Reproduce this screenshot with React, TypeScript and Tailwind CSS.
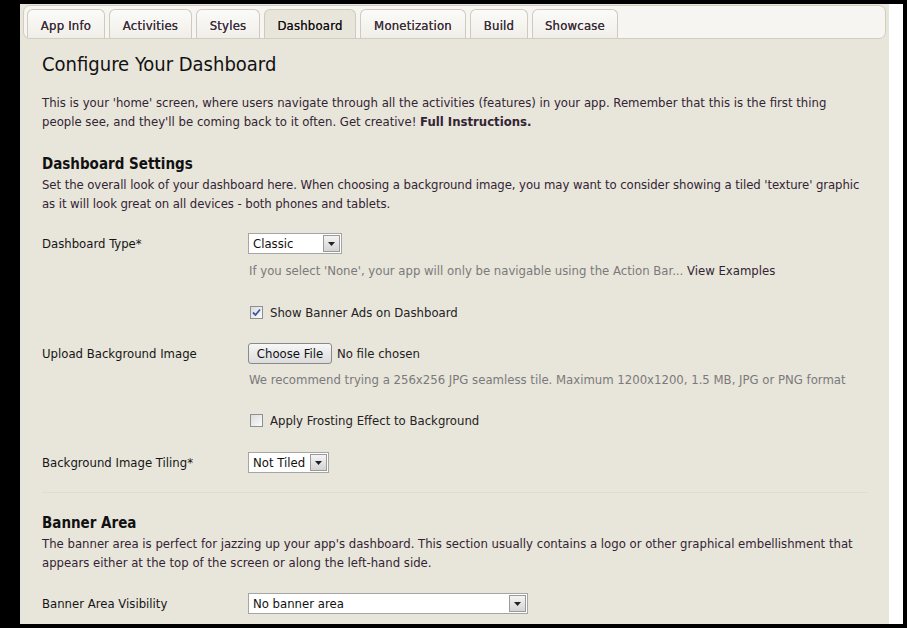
import React from "react";

const tabs = [
  { label: "App Info", w: "w-[78px]" },
  { label: "Activities", w: "w-[83px]" },
  { label: "Styles", w: "w-[64px]" },
  { label: "Dashboard", w: "w-[92px]", active: true },
  { label: "Monetization", w: "w-[106px]" },
  { label: "Build", w: "w-[58px]" },
  { label: "Showcase", w: "w-[86px]" },
];

function Arrow() {
  return (
    <div className="flex h-full w-[17px] items-center justify-center border border-[#9a9a9a] bg-gradient-to-b from-[#f4f4f4] to-[#d4d4d4]">
      <svg width="7" height="4" viewBox="0 0 7 4">
        <polygon points="0,0 7,0 3.5,4" fill="#222" />
      </svg>
    </div>
  );
}

function Select({ value, w }: { value: string; w: string }) {
  return (
    <div className={`flex h-[21px] items-center justify-between border border-[#a5a5a5] bg-white pl-[4px] ${w}`}>
      <span className="text-[13px] text-[#111]">{value}</span>
      <div className="h-[17px] pr-[1px]">
        <Arrow />
      </div>
    </div>
  );
}

function Checkbox({ checked }: { checked?: boolean }) {
  return (
    <div className="flex h-[13px] w-[13px] items-center justify-center border border-[#8e8f8f] bg-gradient-to-br from-[#dcdcdc] to-[#fbfbfb]">
      {checked && (
        <svg width="9" height="9" viewBox="0 0 9 9">
          <path d="M1 4.5 L3.5 7 L8 1.5" stroke="#3d56a8" strokeWidth="1.8" fill="none" />
        </svg>
      )}
    </div>
  );
}

function Row({ label, children }: { label: string; children: React.ReactNode }) {
  return (
    <div className="flex items-center">
      <div className="w-[206px] text-[13px] text-[#151515]">{label}</div>
      {children}
    </div>
  );
}

export default function App() {
  return (
    <div className="flex h-[628px] w-[907px] overflow-hidden bg-black pl-[20px] pr-[4px] pt-[4px] font-['DejaVu_Sans_Condensed','DejaVu_Sans',sans-serif] text-[13px]">
      <div className="h-[620px] w-[869px] bg-[#e8e5db]">
        {/* tab bar */}
        <div className="ml-[3px] mt-[1px] flex h-[34px] w-[863px] items-end gap-[4px] rounded-[7px] border border-[#d2cdc0] bg-[#f6f5f1] pl-[3px]">
          {tabs.map((t) => (
            <div
              key={t.label}
              className={`flex h-[29px] items-center justify-center rounded-t-[6px] border border-b-0 border-[#cfcabd] pt-[3px] text-[13px] tracking-[0.2px] [text-shadow:0_0_0.5px_#3b2d3b] ${t.w} ${
                t.active
                  ? "bg-[#e8e5db] text-[#111]"
                  : "bg-gradient-to-b from-[#fbfbf9] to-[#f0eee8] text-[#3b2d3b]"
              }`}
            >
              {t.label}
            </div>
          ))}
        </div>

        <div className="pl-[22px] pr-[21px]">
          <h1 className="mt-[13px] text-[20px] leading-[24px] text-[#111]">Configure Your Dashboard</h1>
          <p className="mt-[17px] text-[13px] leading-[19px] text-[#332433]">
            This is your 'home' screen, where users navigate through all the activities (features) in your app. Remember that this is the first thing people see, and they'll be coming back to it often. Get creative!{" "}
            <span className="font-bold">Full Instructions.</span>
          </p>

          <h2 className="mt-[23px] text-[15px] font-bold leading-[20px] text-[#111]">Dashboard Settings</h2>
          <p className="mt-[1px] text-[13px] leading-[19px] tracking-[-0.07px] text-[#332433]">
            Set the overall look of your dashboard here. When choosing a background image, you may want to consider showing a tiled 'texture' graphic as it will look great on all devices - both phones and tablets.
          </p>

          <div className="mt-[20px]">
            <Row label="Dashboard Type*">
              <Select value="Classic" w="w-[94px]" />
            </Row>
          </div>
          <div className="mt-[7px] pl-[207px] text-[13px] leading-[19px] text-[#7a7a7a]">
            If you select 'None', your app will only be navigable using the Action Bar...{" "}
            <span className="text-[#332433]">View Examples</span>
          </div>

          <div className="mt-[23px] flex h-[19px] items-center pl-[208px]">
            <Checkbox checked />
            <span className="ml-[7px] text-[13px] text-[#222]">Show Banner Ads on Dashboard</span>
          </div>

          <div className="mt-[21px]">
            <Row label="Upload Background Image">
              <div className="flex items-center">
                <div className="flex h-[21px] w-[84px] items-center justify-center rounded-[3px] border border-[#8a8a8a] bg-gradient-to-b from-[#f7f7f7] to-[#dcdcdc] text-[13px] text-[#111]">
                  Choose File
                </div>
                <span className="ml-[5px] text-[13px] text-[#222]">No file chosen</span>
              </div>
            </Row>
          </div>
          <div className="mt-[6px] pl-[207px] text-[13px] leading-[19px] text-[#7a7a7a]">
            We recommend trying a 256x256 JPG seamless tile. Maximum 1200x1200, 1.5 MB, JPG or PNG format
          </div>

          <div className="mt-[22px] flex h-[19px] items-center pl-[208px]">
            <Checkbox />
            <span className="ml-[7px] text-[13px] text-[#222]">Apply Frosting Effect to Background</span>
          </div>

          <div className="mt-[22px]">
            <Row label="Background Image Tiling*">
              <Select value="Not Tiled" w="w-[81px]" />
            </Row>
          </div>

          <div className="mt-[19px] h-px bg-[#dedcd6]" />

          <h2 className="mt-[20px] text-[15px] font-bold leading-[20px] text-[#111]">Banner Area</h2>
          <p className="mt-[1px] text-[13px] leading-[19px] text-[#332433]">
            The banner area is perfect for jazzing up your app's dashboard. This section usually contains a logo or other graphical embellishment that appears either at the top of the screen or along the left-hand side.
          </p>

          <div className="mt-[21px]">
            <Row label="Banner Area Visibility">
              <Select value="No banner area" w="w-[280px]" />
            </Row>
          </div>
        </div>
      </div>
      <div className="h-[620px] w-[14px] bg-white" />
    </div>
  );
}
